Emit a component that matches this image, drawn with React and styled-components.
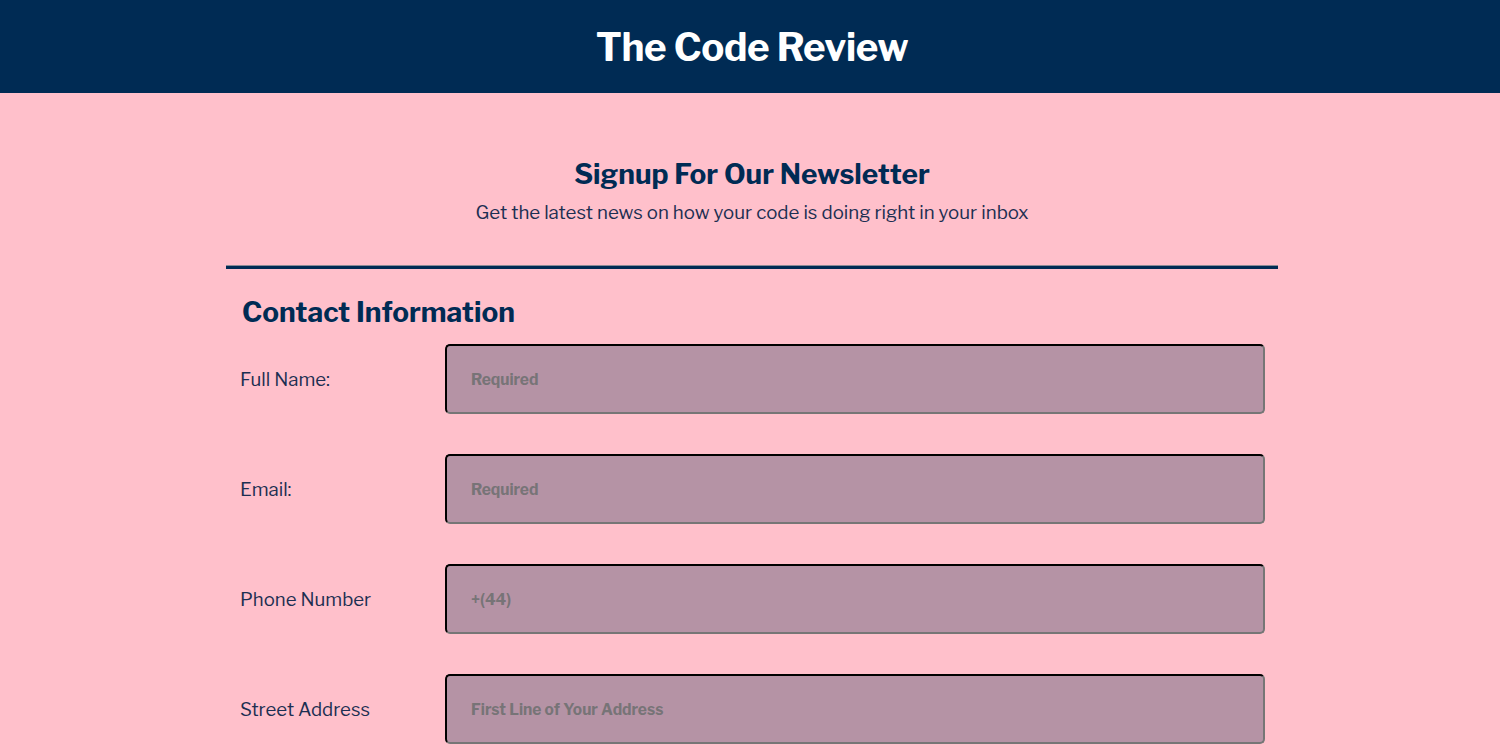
import React from 'react';
import styled, { createGlobalStyle } from 'styled-components';

const GlobalStyle = createGlobalStyle`
  html, body {
    margin: 0;
    padding: 0;
    background-color: #ffc0cb;
    font-family: "Libre Franklin", "Lato", "Liberation Sans", sans-serif;
  }
`;

const Header = styled.header`
  background-color: #002b54;
  height: 93px;
  display: flex;
  justify-content: center;
  align-items: center;
  padding-left: 4px;
`;

const Title = styled.h1`
  margin: 0;
  color: white;
  font-size: 38.5px;
  font-weight: 700;
  letter-spacing: -0.01em;
`;

const Main = styled.main`
  width: 1052px;
  margin: 0 auto;
  padding-left: 4px;
  color: #002b54;
`;

const Intro = styled.section`
  text-align: center;
  padding-top: 59px;
  padding-bottom: 35px;
`;

const IntroHeading = styled.h2`
  margin: 0;
  font-size: 28px;
  font-weight: 700;
  line-height: 44px;
`;

const IntroText = styled.p`
  margin: 0;
  font-size: 18.7px;
  line-height: 34px;
  color: #1c2f52;
`;

const Divider = styled.hr`
  margin: 0;
  border: none;
  border-top: 1px solid #8a8a95;
  height: 3px;
  background-color: #002b54;
`;

const Fieldset = styled.div`
  padding: 23px 14px 0;
`;

const SectionHeading = styled.h2`
  margin: 0 0 12px 2px;
  font-size: 28px;
  font-weight: 700;
  line-height: 40px;
`;

const Row = styled.div`
  display: grid;
  grid-template-columns: 205px 820px;
  align-items: center;
  margin-bottom: 40px;
`;

const Label = styled.label`
  font-size: 18.6px;
  color: #1c2f52;
`;

const Input = styled.input`
  box-sizing: border-box;
  height: 70px;
  width: 100%;
  border: 2px inset #767676;
  border-top-color: #333;
  border-left-color: #333;
  border-radius: 5px;
  background-color: #b593a5;
  padding: 0 24px;
  font-family: inherit;
  font-size: 15.5px;
  font-weight: 700;
  &::placeholder {
    color: #777477;
  }
`;

const fields = [
  { id: 'name', label: 'Full Name:', placeholder: 'Required' },
  { id: 'email', label: 'Email:', placeholder: 'Required' },
  { id: 'phone', label: 'Phone Number', placeholder: '+(44)' },
  { id: 'street', label: 'Street Address', placeholder: 'First Line of Your Address' },
];

export default function App() {
  return (
    <>
      <GlobalStyle />
      <Header>
        <Title>The Code Review</Title>
      </Header>
      <Main>
        <Intro>
          <IntroHeading>Signup For Our Newsletter</IntroHeading>
          <IntroText>Get the latest news on how your code is doing right in your inbox</IntroText>
        </Intro>
        <Divider />
        <Fieldset>
          <SectionHeading>Contact Information</SectionHeading>
          {fields.map((f) => (
            <Row key={f.id}>
              <Label htmlFor={f.id}>{f.label}</Label>
              <Input id={f.id} placeholder={f.placeholder} />
            </Row>
          ))}
        </Fieldset>
      </Main>
    </>
  );
}
